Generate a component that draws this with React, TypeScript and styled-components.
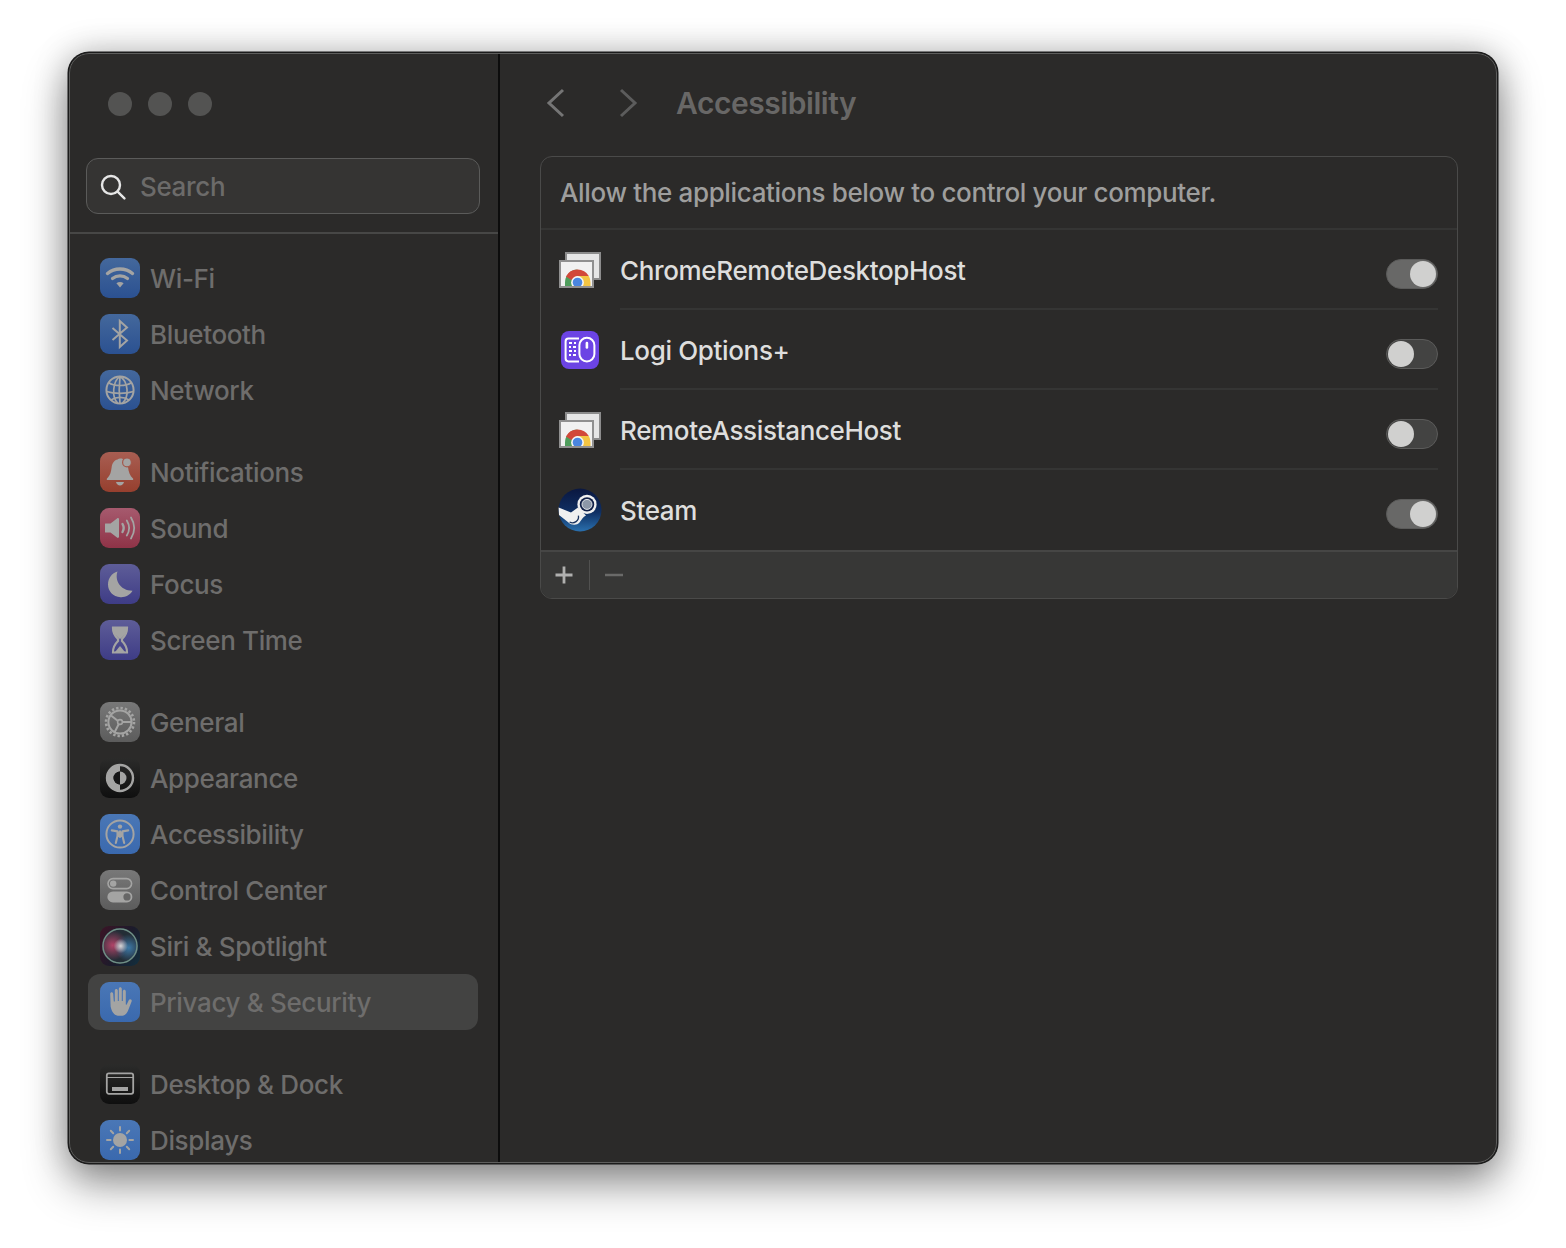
import React from "react";
import styled, { createGlobalStyle } from "styled-components";

const GlobalStyle = createGlobalStyle`
  html, body {
    margin: 0;
    padding: 0;
    background: #fff;
  }
  * {
    box-sizing: border-box;
  }
`;

const GLYPH = "#a4a4a3";

const tiles: Record<string, string> = {
  blue: "linear-gradient(#44689c, #2b5191)",
  brightBlue: "linear-gradient(#4a77b6, #3a69ae)",
  red: "linear-gradient(#a85e52, #963f2e)",
  rose: "linear-gradient(#a65a6e, #8f3347)",
  purple: "linear-gradient(#5e5d98, #3e3c86)",
  gray: "linear-gradient(#787878, #5c5c5c)",
  dark: "linear-gradient(#2b2b2a, #0f0f0f)",
  siri: "linear-gradient(120deg, #3c1426, #1c1b2b 55%, #12303f)",
};

const WifiGlyph = () => (
  <svg viewBox="0 0 40 40" width="40" height="40" fill="none" stroke={GLYPH} strokeLinecap="round">
    <path d="M7.5 15.5C14.5 9.5 25.5 9.5 32.5 15.5" strokeWidth="3.4" />
    <path d="M12.5 20.5C16.8 17 23.2 17 27.5 20.5" strokeWidth="3.2" />
    <path d="M16.4 25.2L20 29.4 23.6 25.2C21.4 23.6 18.6 23.6 16.4 25.2Z" fill={GLYPH} stroke="none" />
  </svg>
);

const BluetoothGlyph = () => (
  <svg viewBox="0 0 40 40" width="40" height="40" fill="none" stroke={GLYPH} strokeWidth="2">
    <path d="M12.5 14L27 26.5 19.8 33V7L27 13.5 12.5 26" />
  </svg>
);

const GlobeGlyph = () => (
  <svg viewBox="0 0 40 40" width="40" height="40" fill="none" stroke={GLYPH} strokeWidth="1.7">
    <circle cx="20" cy="20" r="13.6" strokeWidth="2" />
    <path d="M20 6.4C13 11 11 27 18 33.6M20 6.4C28 11 30 27 22 33.6M20 6.4C19 15 19 25 20 33.6" />
    <path d="M8.5 12.5C14 16.5 26 16.5 31.5 12.5" />
    <path d="M6.6 21.5C14 24 26 24 33.4 21.5" />
    <path d="M11 30C16 26.5 24 26.5 29 30" />
  </svg>
);

const BellGlyph = () => (
  <svg viewBox="0 0 40 40" width="40" height="40" fill={GLYPH}>
    <path d="M21 6.5C22 6.5 23 7 23.4 7.6 22.4 11 24.4 14.4 28 15 28.6 20 29.8 23.6 33 26.4 33.6 27 33.2 28 32.4 28H7.6C6.8 28 6.4 27 7 26.4 10.4 23.4 11 19.6 11.6 15.4 12.2 11 14.6 8.2 17.6 7.6 18.2 6.8 19.6 6.5 21 6.5Z" />
    <circle cx="27" cy="10.4" r="4.4" stroke="#a4584b" strokeWidth="1.2" />
    <path d="M16 30H24C23.4 32.4 22 33.4 20 33.4S16.6 32.4 16 30Z" />
  </svg>
);

const SoundGlyph = () => (
  <svg viewBox="0 0 40 40" width="40" height="40" fill="none" stroke={GLYPH} strokeLinecap="round">
    <path
      d="M5.5 15.5H10.5L17 10.4C18 9.8 19 10.2 19 11.4V28.6C19 29.8 18 30.2 17 29.6L10.5 24.5H5.5C5 24.5 5 24 5 23.5V16.5C5 16 5 15.5 5.5 15.5Z"
      fill={GLYPH}
      stroke="none"
    />
    <path d="M22.5 16C24 18.5 24 21.5 22.5 24" strokeWidth="2.4" />
    <path d="M26.8 12.5C29.6 17 29.6 23 26.8 27.5" strokeWidth="1.8" />
    <path d="M31 9.5C35 16 35 24 31 30.5" strokeWidth="1.8" />
  </svg>
);

const MoonGlyph = () => (
  <svg viewBox="0 0 40 40" width="40" height="40" fill={GLYPH}>
    <path d="M17.5 7.5C14.5 16 20 26.5 32.5 26.8 30 31 25.5 33.5 20.5 33.2 13 32.8 8 27 8 20.5 8 14 12 9 17.5 7.5Z" />
  </svg>
);

const HourglassGlyph = () => (
  <svg viewBox="0 0 40 40" width="40" height="40" fill="none" stroke={GLYPH} strokeWidth="2.2">
    <path d="M13 7.5H27C27.2 12 25.5 15.5 22 19V21C25.5 24.5 27.2 28 27 32.5H13C12.8 28 14.5 24.5 18 21V19C14.5 15.5 12.8 12 13 7.5Z" />
    <path d="M13 8H27C27 12 25 15.5 20 19 15 15.5 13 12 13 8Z" fill={GLYPH} stroke="none" />
    <path d="M20 26L25 32H15Z" fill={GLYPH} stroke="none" />
  </svg>
);

const GearGlyph = () => (
  <svg viewBox="0 0 40 40" width="40" height="40" fill="none" stroke={GLYPH}>
    <circle cx="20" cy="20" r="14" strokeWidth="2.6" strokeDasharray="2.4 2" />
    <circle cx="20" cy="20" r="11.6" strokeWidth="2" />
    <circle cx="20" cy="20" r="2.4" strokeWidth="1.6" />
    <path d="M18 19L11 13.5M22.4 20H31M18.8 22L14.5 30.5" strokeWidth="2" />
  </svg>
);

const AppearanceGlyph = () => (
  <svg viewBox="0 0 40 40" width="40" height="40" fill="none">
    <circle cx="20" cy="20" r="13" stroke={GLYPH} strokeWidth="2.4" />
    <path d="M20 7A13 13 0 0 0 20 33V26.5A6.5 6.5 0 0 1 20 13.5Z" fill={GLYPH} />
    <path d="M20 13.5A6.5 6.5 0 0 0 20 26.5Z" fill="#161616" />
    <path d="M20 13.5A6.5 6.5 0 0 1 20 26.5Z" fill={GLYPH} />
  </svg>
);

const PersonGlyph = () => (
  <svg viewBox="0 0 40 40" width="40" height="40" fill="none" stroke={GLYPH}>
    <circle cx="20" cy="20" r="13.6" strokeWidth="2" />
    <circle cx="20" cy="12.6" r="2.2" fill={GLYPH} stroke="none" />
    <path
      d="M11.8 16.4L17.5 17.4V22L15.8 29M28.2 16.4L22.5 17.4V22L24.2 29M20 23V17.4"
      strokeWidth="2.1"
      strokeLinecap="round"
      strokeLinejoin="round"
    />
    <path d="M17.5 17.4H22.5V23H17.5Z" fill={GLYPH} stroke="none" />
  </svg>
);

const SwitchesGlyph = () => (
  <svg viewBox="0 0 40 40" width="40" height="40" fill="none">
    <rect x="8" y="8.6" width="23.6" height="10" rx="5" stroke={GLYPH} strokeWidth="1.6" />
    <circle cx="13.2" cy="13.6" r="3.2" fill={GLYPH} />
    <rect x="7.4" y="21.4" width="25" height="11" rx="5.5" fill={GLYPH} />
    <circle cx="27" cy="26.9" r="3.6" fill="#666" />
  </svg>
);

const SiriGlyph = () => (
  <svg viewBox="0 0 40 40" width="40" height="40" fill="none">
    <defs>
      <radialGradient id="siriRed" cx="0.3" cy="0.48" r="0.42">
        <stop offset="0" stopColor="#b04468" />
        <stop offset="1" stopColor="#b04468" stopOpacity="0" />
      </radialGradient>
      <radialGradient id="siriBlue" cx="0.74" cy="0.55" r="0.38">
        <stop offset="0" stopColor="#3d78a6" />
        <stop offset="1" stopColor="#3d78a6" stopOpacity="0" />
      </radialGradient>
      <radialGradient id="siriLight" cx="0.52" cy="0.5" r="0.2">
        <stop offset="0" stopColor="#d6d6d6" />
        <stop offset="1" stopColor="#d6d6d6" stopOpacity="0" />
      </radialGradient>
    </defs>
    <circle cx="20" cy="20" r="18" fill="#232d36" />
    <circle cx="20" cy="20" r="18" fill="url(#siriRed)" />
    <circle cx="20" cy="20" r="18" fill="url(#siriBlue)" />
    <circle cx="20" cy="20" r="18" fill="url(#siriLight)" />
    <circle cx="20" cy="20" r="17" stroke="#6f8f86" strokeWidth="1.4" />
  </svg>
);

const HandGlyph = () => (
  <svg viewBox="0 0 40 40" width="40" height="40" fill={GLYPH}>
    <path d="M15 32.8C12.4 31 11.4 27.8 10.6 24.6L10.2 11.8C10.2 9.6 13 9.6 13.2 11.8L13.8 19.4H14.8V8.6C14.8 6.4 17.8 6.4 17.8 8.6V19H18.8V7C18.8 4.8 21.8 4.8 21.8 7V19H22.8V9.4C22.8 7.2 25.8 7.2 25.8 9.4V22.6L26.6 22.8 28.6 18.4C29.6 16.4 32.4 17.4 31.6 19.6L28.2 28.2C26.8 31.6 25 33.8 21 33.8 18.6 33.8 16.6 33.8 15 32.8Z" />
  </svg>
);

const DockGlyph = () => (
  <svg viewBox="0 0 40 40" width="40" height="40" fill="none">
    <rect x="6.8" y="9.4" width="26.4" height="20.4" rx="2" stroke={GLYPH} strokeWidth="1.8" />
    <path d="M7 13.5H33" stroke={GLYPH} strokeWidth="1.2" />
    <rect x="12" y="23" width="16" height="4" fill={GLYPH} />
  </svg>
);

const SunGlyph = () => (
  <svg viewBox="0 0 40 40" width="40" height="40" fill="none" stroke={GLYPH} strokeWidth="2" strokeLinecap="round">
    <circle cx="20" cy="20" r="7" fill={GLYPH} stroke="none" />
    <path d="M20 7V10.6M20 29.4V33M7 20H10.6M29.4 20H33M10.8 10.8L13.2 13.2M26.8 26.8L29.2 29.2M10.8 29.2L13.2 26.8M26.8 13.2L29.2 10.8" />
  </svg>
);

type NavItem = { label: string; tile: string; glyph: React.ReactNode; active?: boolean };

const navGroups: NavItem[][] = [
  [
    { label: "Wi-Fi", tile: "blue", glyph: <WifiGlyph /> },
    { label: "Bluetooth", tile: "blue", glyph: <BluetoothGlyph /> },
    { label: "Network", tile: "blue", glyph: <GlobeGlyph /> },
  ],
  [
    { label: "Notifications", tile: "red", glyph: <BellGlyph /> },
    { label: "Sound", tile: "rose", glyph: <SoundGlyph /> },
    { label: "Focus", tile: "purple", glyph: <MoonGlyph /> },
    { label: "Screen Time", tile: "purple", glyph: <HourglassGlyph /> },
  ],
  [
    { label: "General", tile: "gray", glyph: <GearGlyph /> },
    { label: "Appearance", tile: "dark", glyph: <AppearanceGlyph /> },
    { label: "Accessibility", tile: "brightBlue", glyph: <PersonGlyph /> },
    { label: "Control Center", tile: "gray", glyph: <SwitchesGlyph /> },
    { label: "Siri & Spotlight", tile: "siri", glyph: <SiriGlyph /> },
    { label: "Privacy & Security", tile: "brightBlue", glyph: <HandGlyph />, active: true },
  ],
  [
    { label: "Desktop & Dock", tile: "dark", glyph: <DockGlyph /> },
    { label: "Displays", tile: "brightBlue", glyph: <SunGlyph /> },
  ],
];

const ChromeIcon = ({ id }: { id: string }) => (
  <svg viewBox="0 0 44 40" width="44" height="40">
    <defs>
      <clipPath id={id}>
        <rect x="3" y="13" width="31" height="23" />
      </clipPath>
    </defs>
    <rect x="8" y="3" width="34" height="26" fill="#e6e6e6" stroke="#8c8c8c" strokeWidth="2" />
    <rect x="2" y="11" width="33" height="26" fill="#f1f1f1" stroke="#909090" strokeWidth="2" />
    <g clipPath={`url(#${id})`}>
      <path d="M19.5 19.5A13 13 0 0 0 7 32.5V38H14V32.5Z" fill="#4f9d5c" />
      <path d="M19.5 19.5A13 13 0 0 1 30.8 26H19.5L13.5 30 7.9 26.6A13 13 0 0 1 19.5 19.5Z" fill="#d2483a" />
      <path d="M30.8 26A13 13 0 0 1 32.5 32.5V38H25V32.5L19.5 26Z" fill="#f3c544" />
      <circle cx="19.5" cy="32.5" r="6.4" fill="#f4f4f4" />
      <circle cx="19.5" cy="32.5" r="4.8" fill="#4a86e0" />
    </g>
  </svg>
);

const LogiIcon = () => (
  <svg viewBox="0 0 38 38" width="38" height="38" fill="none" stroke="#fff" strokeWidth="2">
    <rect width="38" height="38" rx="8" fill="#6c44e4" stroke="none" />
    <path d="M18 7.6H7.4C5.6 7.6 4.6 8.6 4.6 10.4V27.6C4.6 29.4 5.6 30.4 7.4 30.4H18" />
    <rect x="18.4" y="6.8" width="15" height="23.6" rx="7.5" />
    <path d="M25.9 12V16.4" strokeWidth="2.6" strokeLinecap="round" />
    <path d="M8 12H11M13 12H15M8 16H10M12 16H15M8 20H11M13 20H15M8 24H10M12 24H15" strokeWidth="2.1" />
  </svg>
);

const SteamIcon = () => (
  <svg viewBox="0 0 44 44" width="44" height="44">
    <defs>
      <linearGradient id="steamFill" x1="0" y1="0" x2="0" y2="1">
        <stop offset="0" stopColor="#0a1740" />
        <stop offset="0.55" stopColor="#0f2f63" />
        <stop offset="1" stopColor="#2a70ae" />
      </linearGradient>
    </defs>
    <circle cx="22" cy="22" r="21.5" fill="url(#steamFill)" />
    <path d="M0.6 19.5L13 24.4 20 19.5 28 27.5C25 28.5 23.5 32 21.5 34.5 19 37.5 13.5 37.5 10.5 34.5L1 27Z" fill="#f0f0f0" />
    <circle cx="29" cy="16.4" r="9.6" fill="#f0f0f0" />
    <circle cx="29" cy="16.4" r="7.2" fill="#101f47" />
    <circle cx="29" cy="16.4" r="5" fill="#8c97a8" stroke="#dfe3e8" strokeWidth="1" />
    <path d="M11.6 34A6 6 0 0 0 20.4 27.6" fill="none" stroke="#1a335f" strokeWidth="1.3" />
  </svg>
);

type AppRow = { name: string; on: boolean; icon: React.ReactNode };

const appRows: AppRow[] = [
  { name: "ChromeRemoteDesktopHost", on: true, icon: <ChromeIcon id="chromeClipA" /> },
  { name: "Logi Options+", on: false, icon: <LogiIcon /> },
  { name: "RemoteAssistanceHost", on: false, icon: <ChromeIcon id="chromeClipB" /> },
  { name: "Steam", on: true, icon: <SteamIcon /> },
];

export default function App() {
  return (
    <Page>
      <GlobalStyle />
      <Window>
        <Sidebar>
          <TrafficLights>
            <Light />
            <Light />
            <Light />
          </TrafficLights>
          <SearchWrap>
            <SearchBox>
              <svg viewBox="0 0 26 26" width="26" height="26" fill="none" stroke="#e6e6e6" strokeWidth="2.4">
                <circle cx="11" cy="11" r="9" />
                <path d="M17.6 17.6L24.4 24.4" strokeLinecap="round" />
              </svg>
              <SearchText>Search</SearchText>
            </SearchBox>
          </SearchWrap>
          <NavList>
            {navGroups.map((group) => (
              <NavGroup key={group[0].label}>
                {group.map((item) => (
                  <NavRow key={item.label} $active={item.active}>
                    <Tile $fill={tiles[item.tile]}>{item.glyph}</Tile>
                    <NavLabel>{item.label}</NavLabel>
                  </NavRow>
                ))}
              </NavGroup>
            ))}
          </NavList>
        </Sidebar>
        <Main>
          <TitleBar>
            <NavButton>
              <svg viewBox="0 0 20 30" width="20" height="30" fill="none" stroke="#757575" strokeWidth="3">
                <path d="M17 2L3 15 17 28" />
              </svg>
            </NavButton>
            <NavButton>
              <svg viewBox="0 0 20 30" width="20" height="30" fill="none" stroke="#5c5c5c" strokeWidth="3">
                <path d="M3 2L17 15 3 28" />
              </svg>
            </NavButton>
            <Title>Accessibility</Title>
          </TitleBar>
          <Card>
            <CardHeader>Allow the applications below to control your computer.</CardHeader>
            {appRows.map((row, i) => (
              <Row key={row.name}>
                <RowIcon>{row.icon}</RowIcon>
                <RowBody $last={i === appRows.length - 1}>
                  <RowName>{row.name}</RowName>
                  <Toggle $on={row.on}>
                    <Knob />
                  </Toggle>
                </RowBody>
              </Row>
            ))}
            <CardFooter>
              <FooterButton>
                <svg viewBox="0 0 20 20" width="20" height="20" stroke="#b0b0af" strokeWidth="2.8">
                  <path d="M10 1.5V18.5M1.5 10H18.5" />
                </svg>
              </FooterButton>
              <FooterDivider />
              <FooterButton>
                <svg viewBox="0 0 20 20" width="20" height="20" stroke="#6a6a69" strokeWidth="2.6">
                  <path d="M1 10H19" />
                </svg>
              </FooterButton>
            </CardFooter>
          </Card>
        </Main>
      </Window>
    </Page>
  );
}

const Page = styled.div`
  width: 1566px;
  height: 1248px;
  padding: 52px 68px 84px;
  overflow: hidden;
  background: #fff;
  font-family: Inter, "Liberation Sans", sans-serif;
  font-weight: 450;
  letter-spacing: -0.35px;
`;

const Window = styled.div`
  position: relative;
  display: flex;
  width: 1430px;
  height: 1112px;
  overflow: hidden;
  background: #2b2a29;
  border: 1px solid #1b1b1b;
  border-radius: 21px;
  box-shadow: 0 0 0 0.5px #1b1b1b, 0 20px 44px rgba(0, 0, 0, 0.42), 0 0 34px rgba(0, 0, 0, 0.22);

  &::after {
    content: "";
    position: absolute;
    inset: 0;
    border: 1.5px solid #5e5e5d;
    border-radius: 20px;
    pointer-events: none;
  }
`;

const Sidebar = styled.aside`
  flex: none;
  width: 431px;
  border-right: 2px solid #0c0c0c;
`;

const TrafficLights = styled.div`
  display: flex;
  gap: 16px;
  padding: 39px 0 0 39px;
`;

const Light = styled.span`
  width: 24px;
  height: 24px;
  border-radius: 50%;
  background: #535352;
`;

const SearchWrap = styled.div`
  padding: 42px 18px 18px 17px;
  border-bottom: 2px solid #474746;
`;

const SearchBox = styled.div`
  display: flex;
  align-items: center;
  gap: 14px;
  height: 56px;
  padding: 1px 0 0 13px;
  background: #353433;
  border: 1px solid #5b5b5a;
  border-radius: 12px;
`;

const SearchText = styled.span`
  font-size: 26px;
  line-height: 32px;
  color: #6c6b6a;
`;

const NavList = styled.nav`
  padding: 16px 20px 0 19px;
`;

const NavGroup = styled.div`
  margin-bottom: 26px;
`;

const NavRow = styled.div<{ $active?: boolean }>`
  display: flex;
  align-items: center;
  gap: 10px;
  height: 56px;
  padding-left: 12px;
  border-radius: 12px;
  background: ${({ $active }) => ($active ? "#434342" : "transparent")};
`;

const Tile = styled.span<{ $fill: string }>`
  flex: none;
  width: 40px;
  height: 40px;
  overflow: hidden;
  border-radius: 9px;
  background: ${({ $fill }) => $fill};

  svg {
    display: block;
  }
`;

const NavLabel = styled.span`
  padding-top: 2px;
  font-size: 26px;
  line-height: 32px;
  color: #6e6d6c;
`;

const Main = styled.main`
  flex: 1;
  min-width: 0;
  padding: 0 39px 0 40px;
`;

const TitleBar = styled.header`
  display: flex;
  align-items: center;
  height: 103px;
  padding-bottom: 3px;
`;

const NavButton = styled.span`
  width: 72px;
  padding-left: 6px;

  svg {
    display: block;
  }
`;

const Title = styled.h1`
  margin: 0 0 0 -8px;
  font-size: 30px;
  line-height: 40px;
  font-weight: 600;
  letter-spacing: -0.45px;
  color: #686766;
`;

const Card = styled.section`
  overflow: hidden;
  border: 1px solid #4a4a49;
  border-radius: 12px;
`;

const CardHeader = styled.div`
  height: 73px;
  padding: 0 19px;
  font-size: 26px;
  line-height: 72px;
  color: #9e9e9d;
  border-bottom: 2px solid #353534;
`;

const Row = styled.div`
  display: flex;
  height: 80px;
`;

const RowIcon = styled.div`
  flex: none;
  display: flex;
  align-items: center;
  justify-content: center;
  width: 79px;
  height: 80px;
  padding: 0 18px 0 17px;

  svg {
    display: block;
    flex: none;
  }
`;

const RowBody = styled.div<{ $last: boolean }>`
  flex: 1;
  display: flex;
  align-items: center;
  justify-content: space-between;
  margin-right: 19px;
  border-bottom: 2px solid ${({ $last }) => ($last ? "transparent" : "#353534")};
`;

const RowName = styled.span`
  padding-top: 4px;
  font-size: 26px;
  line-height: 32px;
  color: #dededd;
`;

const Toggle = styled.span<{ $on: boolean }>`
  display: flex;
  justify-content: ${({ $on }) => ($on ? "flex-end" : "flex-start")};
  width: 52px;
  height: 30px;
  margin-top: 10px;
  padding: 1px;
  border-radius: 15px;
  background: ${({ $on }) => ($on ? "#686867" : "#434342")};
  border: 1px solid #5b5b5a;
`;

const Knob = styled.span`
  width: 26px;
  height: 26px;
  border-radius: 50%;
  background: #d0d0cf;
`;

const CardFooter = styled.div`
  display: flex;
  align-items: center;
  height: 48px;
  padding-left: 13px;
  background: #373736;
  border-top: 2px solid #464645;
`;

const FooterButton = styled.span`
  display: flex;

  svg {
    display: block;
  }
`;

const FooterDivider = styled.span`
  width: 1px;
  height: 30px;
  margin: 0 14px 0 15px;
  background: #515150;
`;
